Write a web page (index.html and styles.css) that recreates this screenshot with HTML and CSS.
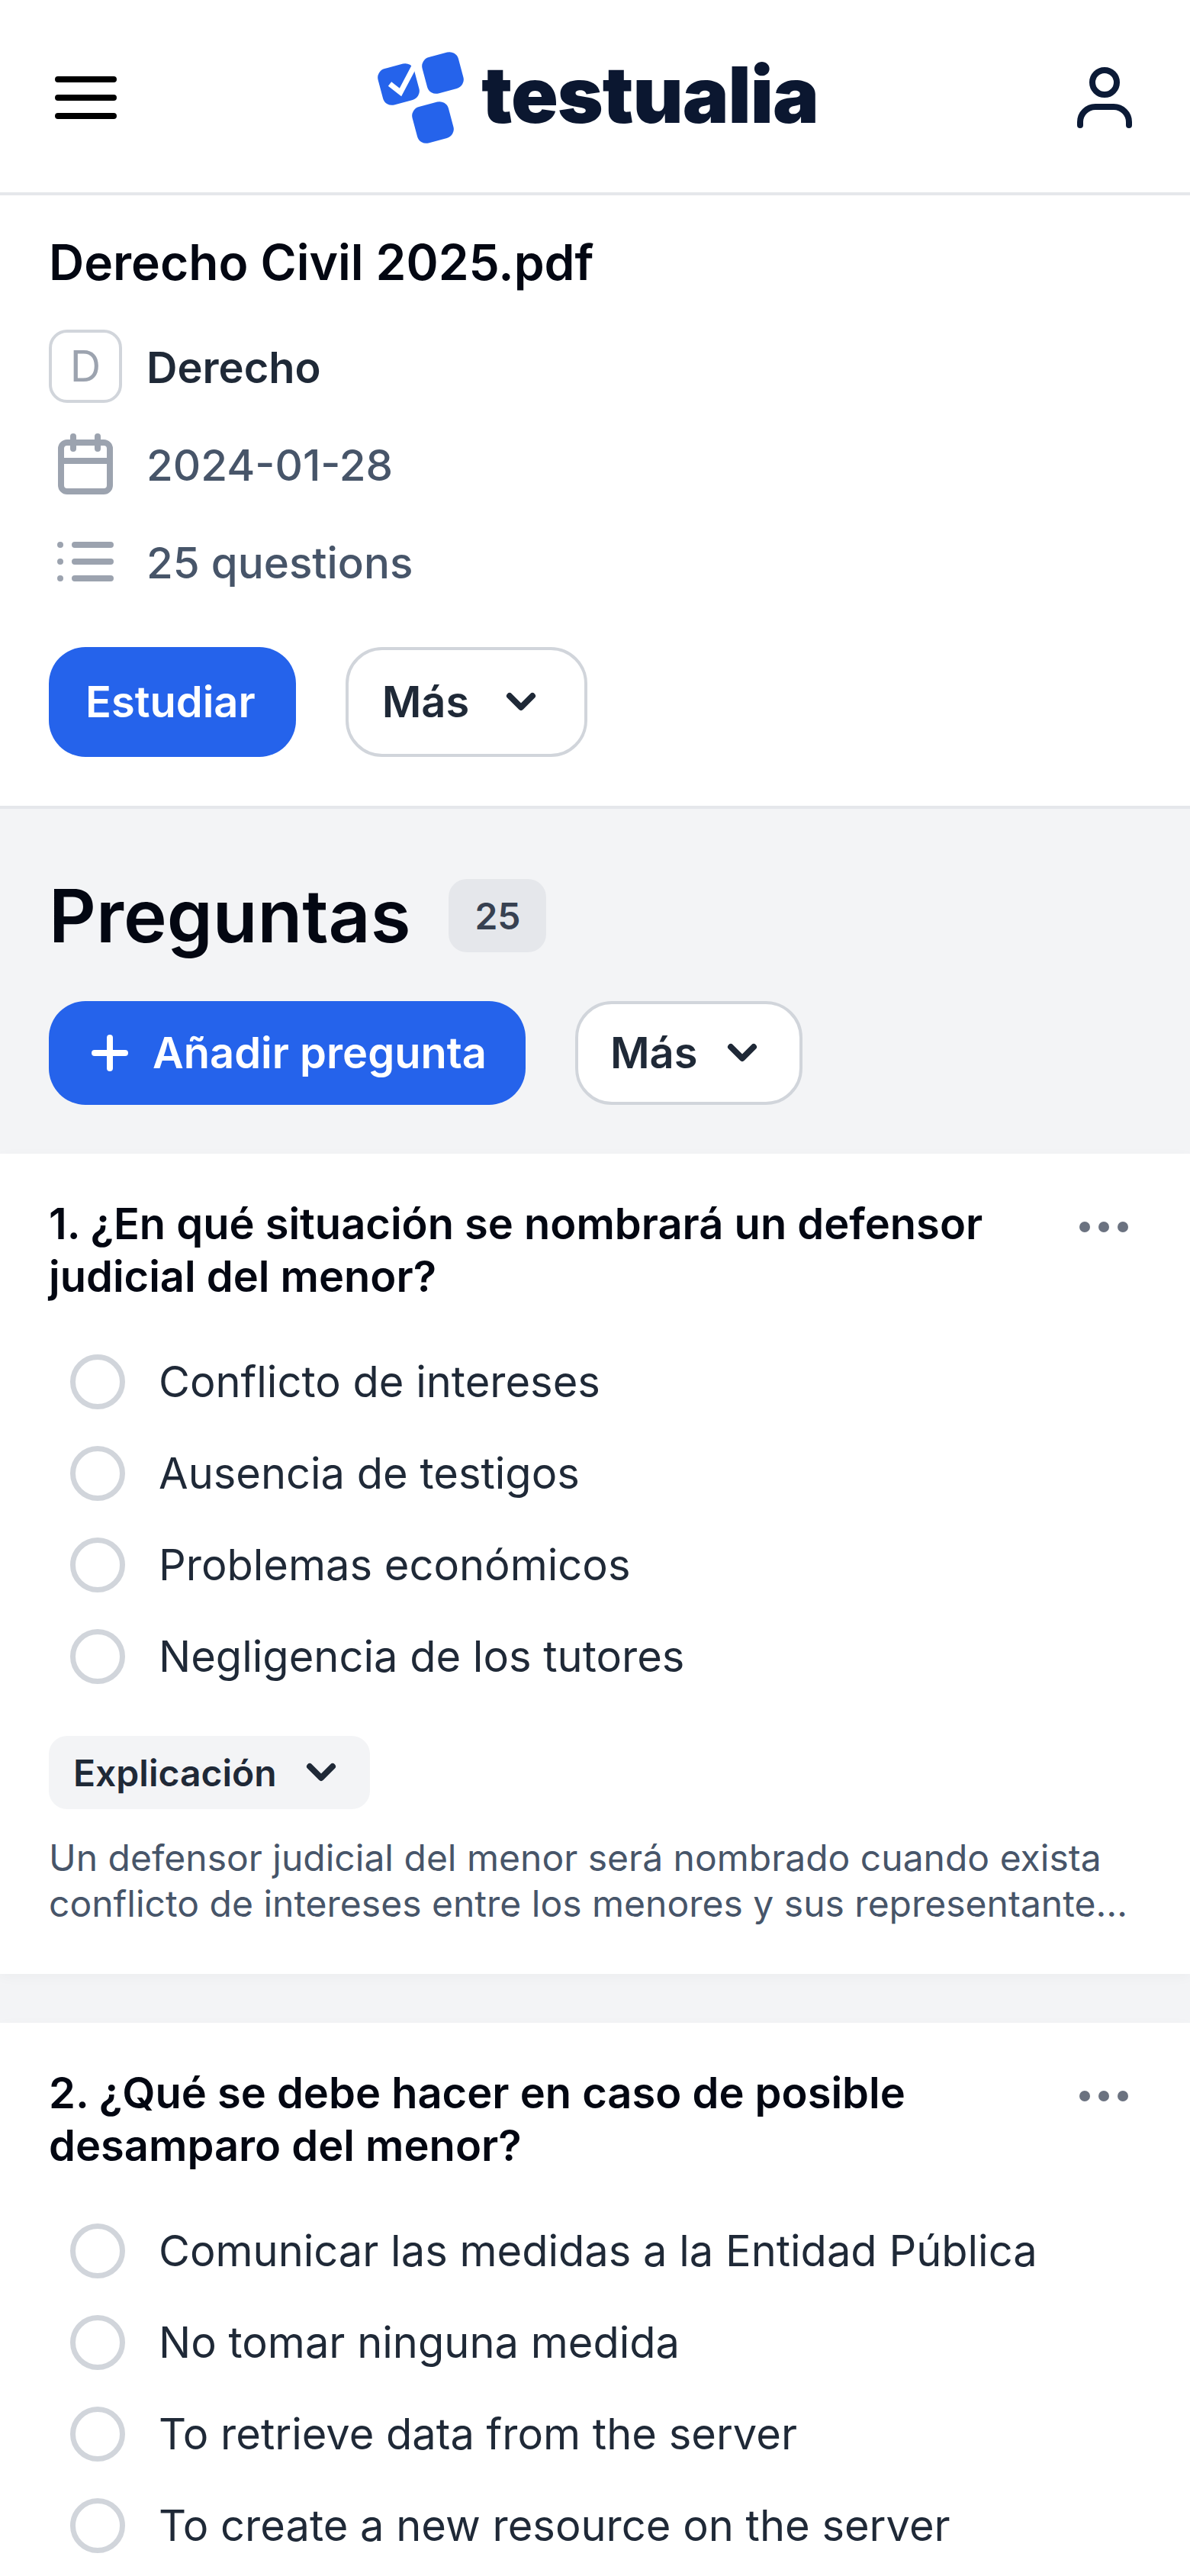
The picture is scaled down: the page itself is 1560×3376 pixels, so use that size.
FILE: index.html
```html
<!DOCTYPE html>
<html lang="es">
<head>
  <meta charset="UTF-8">
  <meta name="viewport" content="width=device-width, initial-scale=1.0">
  <title>Derecho Civil 2025.pdf - Testualia</title>
  <link rel="stylesheet" href="styles.css">
</head>
<body>

  <header class="topbar">
    <button type="button" class="icon-button" aria-label="Menu">
      <svg class="menu-icon" viewBox="0 0 81 56" fill="none" stroke="#000" stroke-width="8" stroke-linecap="round">
        <path d="M4 4h73M4 28h73M4 52h73"/>
      </svg>
    </button>
    <a class="logo" href="#">
      <svg class="logo-mark" viewBox="0 0 120 124">
        <g fill="#2563eb">
          <rect x="6" y="20" width="49" height="49" rx="12" transform="rotate(-15 30.5 44.5)"/>
          <rect x="64" y="5" width="49" height="49" rx="12" transform="rotate(-15 88.5 29.5)"/>
          <rect x="51" y="70" width="49" height="49" rx="12" transform="rotate(-15 75.5 94.5)"/>
        </g>
        <path d="M19 44l14 11 20-38" fill="none" stroke="#fff" stroke-width="7"/>
      </svg>
      <span class="logo-text">testualia</span>
    </a>
    <button type="button" class="icon-button" aria-label="Account">
      <svg class="user-icon" viewBox="0 0 72 80" fill="none" stroke="#0b1a36" stroke-width="8" stroke-linecap="round">
        <circle cx="36" cy="20" r="16"/>
        <path d="M4 76v-4a20 20 0 0 1 20-20h24a20 20 0 0 1 20 20v4"/>
      </svg>
    </button>
  </header>

  <section class="doc-info">
    <h1 class="doc-title">Derecho Civil 2025.pdf</h1>
    <div class="meta-row">
      <span class="subject-letter">D</span>
      <span class="subject-name">Derecho</span>
    </div>
    <div class="meta-row">
      <span class="meta-icon">
        <svg width="72" height="80" viewBox="0 0 72 80" fill="none" stroke="#9ca3af" stroke-width="8" stroke-linecap="round" stroke-linejoin="round">
          <rect x="4" y="12" width="64" height="64" rx="8"/>
          <path d="M4 36h64M20 4v16M52 4v16"/>
        </svg>
      </span>
      <span class="meta-text">2024-01-28</span>
    </div>
    <div class="meta-row">
      <span class="meta-icon">
        <svg width="74" height="52" viewBox="0 0 74 52" fill="none" stroke="#9ca3af" stroke-width="8" stroke-linecap="round">
          <path d="M23 4h47M23 26h47M23 48h47"/>
          <path d="M4 4h.01M4 26h.01M4 48h.01"/>
        </svg>
      </span>
      <span class="meta-text">25 questions</span>
    </div>
    <div class="button-row">
      <button type="button" class="btn btn-primary">Estudiar</button>
      <button type="button" class="btn btn-outline">
        Más
        <svg class="chevron" viewBox="0 0 40 26" fill="none" stroke="#1f2937" stroke-width="8" stroke-linecap="round" stroke-linejoin="round">
          <path d="M5 5l15 15L35 5"/>
        </svg>
      </button>
    </div>
  </section>

  <main class="questions">
    <div class="questions-head">
      <div class="questions-title">
        <h2>Preguntas</h2>
        <span class="count-badge">25</span>
      </div>
      <div class="button-row">
        <button type="button" class="btn btn-primary btn-add">
          <svg class="plus-icon" viewBox="0 0 48 48" fill="none" stroke="#fff" stroke-width="8" stroke-linecap="round">
            <path d="M24 4v40M4 24h40"/>
          </svg>
          Añadir pregunta
        </button>
        <button type="button" class="btn btn-outline btn-small">
          Más
          <svg class="chevron" viewBox="0 0 40 26" fill="none" stroke="#1f2937" stroke-width="8" stroke-linecap="round" stroke-linejoin="round">
            <path d="M5 5l15 15L35 5"/>
          </svg>
        </button>
      </div>
    </div>

    <article class="card">
      <div class="card-head">
        <h3>1. ¿En qué situación se nombrará un defensor judicial del menor?</h3>
        <svg class="dots" viewBox="0 0 66 16" fill="#6b7280">
          <circle cx="8" cy="8" r="7"/><circle cx="33" cy="8" r="7"/><circle cx="58" cy="8" r="7"/>
        </svg>
      </div>
      <ul class="options">
        <li><span class="radio"></span>Conflicto de intereses</li>
        <li><span class="radio"></span>Ausencia de testigos</li>
        <li><span class="radio"></span>Problemas económicos</li>
        <li><span class="radio"></span>Negligencia de los tutores</li>
      </ul>
      <button type="button" class="explain-toggle">
        Explicación
        <svg class="chevron" viewBox="0 0 40 26" fill="none" stroke="#1f2937" stroke-width="8" stroke-linecap="round" stroke-linejoin="round">
          <path d="M5 5l15 15L35 5"/>
        </svg>
      </button>
      <p class="explanation">Un defensor judicial del menor será nombrado cuando exista conflicto de intereses entre los menores y sus representante…</p>
    </article>

    <article class="card">
      <div class="card-head">
        <h3>2. ¿Qué se debe hacer en caso de posible desamparo del menor?</h3>
        <svg class="dots" viewBox="0 0 66 16" fill="#6b7280">
          <circle cx="8" cy="8" r="7"/><circle cx="33" cy="8" r="7"/><circle cx="58" cy="8" r="7"/>
        </svg>
      </div>
      <ul class="options">
        <li><span class="radio"></span>Comunicar las medidas a la Entidad Pública</li>
        <li><span class="radio"></span>No tomar ninguna medida</li>
        <li><span class="radio"></span>To retrieve data from the server</li>
        <li><span class="radio"></span>To create a new resource on the server</li>
      </ul>
    </article>
  </main>

</body>
</html>
```

FILE: styles.css
```css
* {
  box-sizing: border-box;
}
body {
  margin: 0;
  height: 3376px;
  overflow: hidden;
  font-family: Inter, "Noto Sans", sans-serif;
  background-color: #fff;
  color: #111827;
}
h1, h2, h3, p, ul {
  margin: 0;
  padding: 0;
}
button {
  font-family: inherit;
  cursor: pointer;
}

/* top bar */
.topbar {
  display: flex;
  align-items: center;
  justify-content: space-between;
  height: 256px;
  padding: 4px 76px 0 72px;
  border-bottom: 4px solid #e5e7eb;
}
.icon-button {
  display: flex;
  padding: 0;
  border: none;
  background: none;
}
.menu-icon {
  width: 81px;
  height: 56px;
}
.user-icon {
  width: 72px;
  height: 80px;
}
.logo {
  display: flex;
  align-items: center;
  gap: 19px;
  text-decoration: none;
}
.logo-mark {
  width: 120px;
  height: 124px;
}
.logo-text {
  margin-bottom: 9px;
  font-size: 102px;
  font-weight: 900;
  letter-spacing: -1px;
  color: #0b1730;
}

/* document info */
.doc-info {
  padding: 40px 64px 64px;
  border-bottom: 4px solid #e5e7eb;
}
.doc-title {
  font-size: 64px;
  line-height: 96px;
  font-weight: 600;
  color: #030712;
  margin-bottom: 40px;
}
.meta-row {
  display: flex;
  align-items: center;
  gap: 32px;
  height: 96px;
  margin-bottom: 32px;
}
.subject-letter {
  display: flex;
  align-items: center;
  justify-content: center;
  width: 96px;
  height: 96px;
  border: 4px solid #d1d5db;
  border-radius: 24px;
  font-size: 56px;
  color: #9ca3af;
}
.subject-name {
  padding-top: 3px;
  font-size: 56px;
  font-weight: 600;
  color: #1f2937;
}
.meta-icon {
  display: flex;
  align-items: center;
  justify-content: center;
  width: 96px;
}
.meta-text {
  padding-top: 3px;
  font-size: 56.5px;
  font-weight: 500;
  color: #475569;
}

/* buttons */
.button-row {
  display: flex;
  gap: 65px;
}
.doc-info .button-row {
  margin-top: 64px;
}
.btn {
  display: flex;
  align-items: center;
  height: 144px;
  padding: 0 53px 0 48px;
  border-radius: 48px;
  font-size: 56px;
  font-weight: 600;
}
.btn-primary {
  border: none;
  background-color: #2563eb;
  color: #fff;
}
.btn-outline {
  gap: 48px;
  padding: 0 63px 0 44px;
  border: 4px solid #d1d5db;
  background-color: #fff;
  color: #1f2937;
}
.btn-add {
  gap: 32px;
  height: 136px;
  padding: 0 51px 0 56px;
}
.btn-small {
  height: 136px;
  gap: 38px;
  padding: 0 55px 0 42px;
}
.chevron {
  width: 40px;
  height: 26px;
  flex-shrink: 0;
}
.plus-icon {
  width: 48px;
  height: 48px;
}

/* questions */
.questions {
  background-color: #f3f4f6;
}
.questions-head {
  padding: 76px 64px 64px;
}
.questions-title {
  display: flex;
  align-items: center;
  gap: 50px;
  margin-bottom: 48px;
}
.questions-title h2 {
  font-size: 96px;
  line-height: 128px;
  font-weight: 600;
  color: #030712;
}
.count-badge {
  display: flex;
  align-items: center;
  justify-content: center;
  width: 128px;
  height: 96px;
  border-radius: 24px;
  background-color: #e5e7eb;
  font-size: 48px;
  font-weight: 600;
  color: #374151;
}
.card {
  padding: 58px 64px 62px;
  margin-bottom: 64px;
  background-color: #fff;
  box-shadow: 0 4px 16px rgba(0, 0, 0, 0.03);
}
.card-head {
  display: flex;
  justify-content: space-between;
  gap: 80px;
}
.card-head h3 {
  font-size: 56px;
  line-height: 69px;
  font-weight: 600;
  color: #030712;
}
.dots {
  flex-shrink: 0;
  width: 66px;
  height: 16px;
  margin: 30px 16px 0 0;
}
.options {
  list-style: none;
  margin-top: 43px;
}
.options li {
  display: flex;
  align-items: center;
  gap: 44px;
  height: 120px;
  padding-left: 28px;
  font-size: 56px;
  color: #1f2937;
}
.radio {
  width: 72px;
  height: 72px;
  border: 7px solid #d1d5db;
  border-radius: 50%;
  flex-shrink: 0;
}
.explain-toggle {
  display: flex;
  align-items: center;
  gap: 38px;
  height: 96px;
  margin-top: 44px;
  padding: 0 44px 0 32px;
  border: none;
  border-radius: 24px;
  background-color: #f3f4f6;
  font-size: 48px;
  font-weight: 600;
  color: #1f2937;
}
.explanation {
  margin-top: 34px;
  font-size: 48px;
  line-height: 60px;
  color: #475569;
}
```
